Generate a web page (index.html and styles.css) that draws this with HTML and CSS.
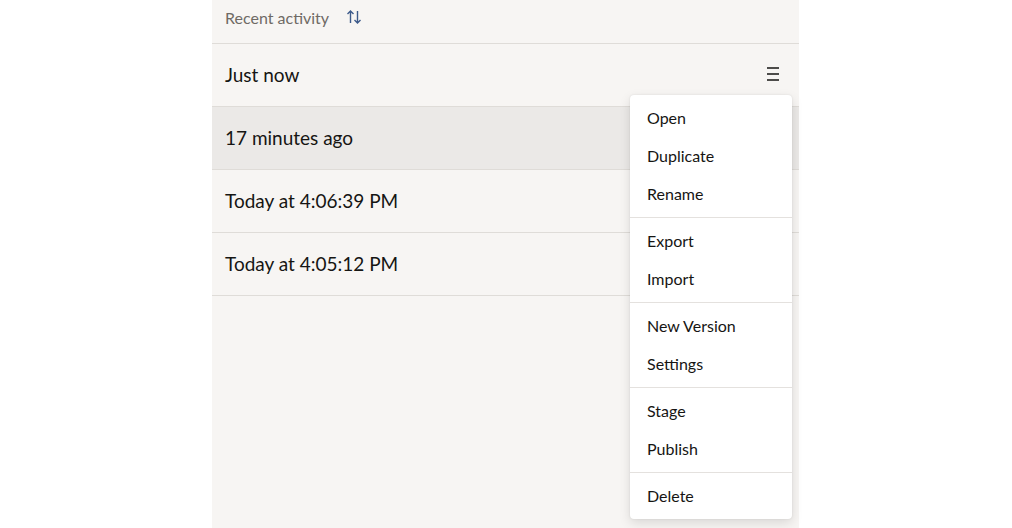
FILE: index.html
```html
<!DOCTYPE html>
<html lang="en">
  <head>
    <meta charset="UTF-8" />
    <title>Recent activity</title>
    <link rel="stylesheet" href="styles.css">
  </head>
  <body>
    <div class="panel">
      <div class="header">
        <span class="header-title">Recent activity</span>
        <svg class="sort-icon" width="16" height="16" viewBox="0 0 16 16" fill="none" stroke="#3d5a8a" stroke-width="1.4">
          <path d="M4.5 14V2M1.5 5l3-3 3 3" />
          <path d="M11.5 2v12M8.5 11l3 3 3-3" />
        </svg>
      </div>
      <div class="row">
        <span>Just now</span>
        <span class="menu-btn">
          <svg width="14" height="14" viewBox="0 0 14 14" stroke="#161513" stroke-width="1.6">
            <path d="M1 1h12M1 7h12M1 13h12" />
          </svg>
        </span>
      </div>
      <div class="row active"><span>17 minutes ago</span></div>
      <div class="row"><span>Today at 4:06:39 PM</span></div>
      <div class="row"><span>Today at 4:05:12 PM</span></div>

      <ul class="menu">
        <li>Open</li>
        <li>Duplicate</li>
        <li>Rename</li>
        <li class="divider"></li>
        <li>Export</li>
        <li>Import</li>
        <li class="divider"></li>
        <li>New Version</li>
        <li>Settings</li>
        <li class="divider"></li>
        <li>Stage</li>
        <li>Publish</li>
        <li class="divider"></li>
        <li>Delete</li>
      </ul>
    </div>
  </body>
</html>
```

FILE: styles.css
```css
* {
  font-family: "Lato", "Noto Sans", sans-serif;
  box-sizing: border-box;
}
body {
  margin: 0;
  background-color: #ffffff;
  height: 528px;
  overflow: hidden;
}
.panel {
  position: relative;
  width: 587px;
  height: 528px;
  margin-left: 212px;
  background-color: #f7f5f3;
}
.header {
  display: flex;
  align-items: center;
  gap: 15px;
  height: 44px;
  padding: 0 13px 9px;
  border-bottom: 1px solid #dfdcd8;
}
.header-title {
  color: #6f6a65;
  font-size: 16px;
}
.sort-icon {
  margin-left: 2px;
}
.row {
  display: flex;
  align-items: center;
  justify-content: space-between;
  height: 63px;
  padding: 0 13px 2px;
  border-bottom: 1px solid #dfdcd8;
  color: #161513;
  font-size: 19px;
}
.row.active {
  background-color: #ebe9e7;
}
.menu-btn {
  display: flex;
  margin-right: 6px;
}
.menu {
  position: absolute;
  left: 418px;
  top: 95px;
  width: 162px;
  margin: 0;
  padding: 4px 0;
  list-style: none;
  background-color: #ffffff;
  border-radius: 4px;
  box-shadow: 0 4px 12px rgba(0, 0, 0, 0.12), 0 0 2px rgba(0, 0, 0, 0.1);
}
.menu li {
  height: 38px;
  line-height: 38px;
  padding-left: 17px;
  color: #161513;
  font-size: 16px;
}
.menu li.divider {
  height: 1px;
  margin: 4px 0;
  background-color: #e4e1de;
}
```
